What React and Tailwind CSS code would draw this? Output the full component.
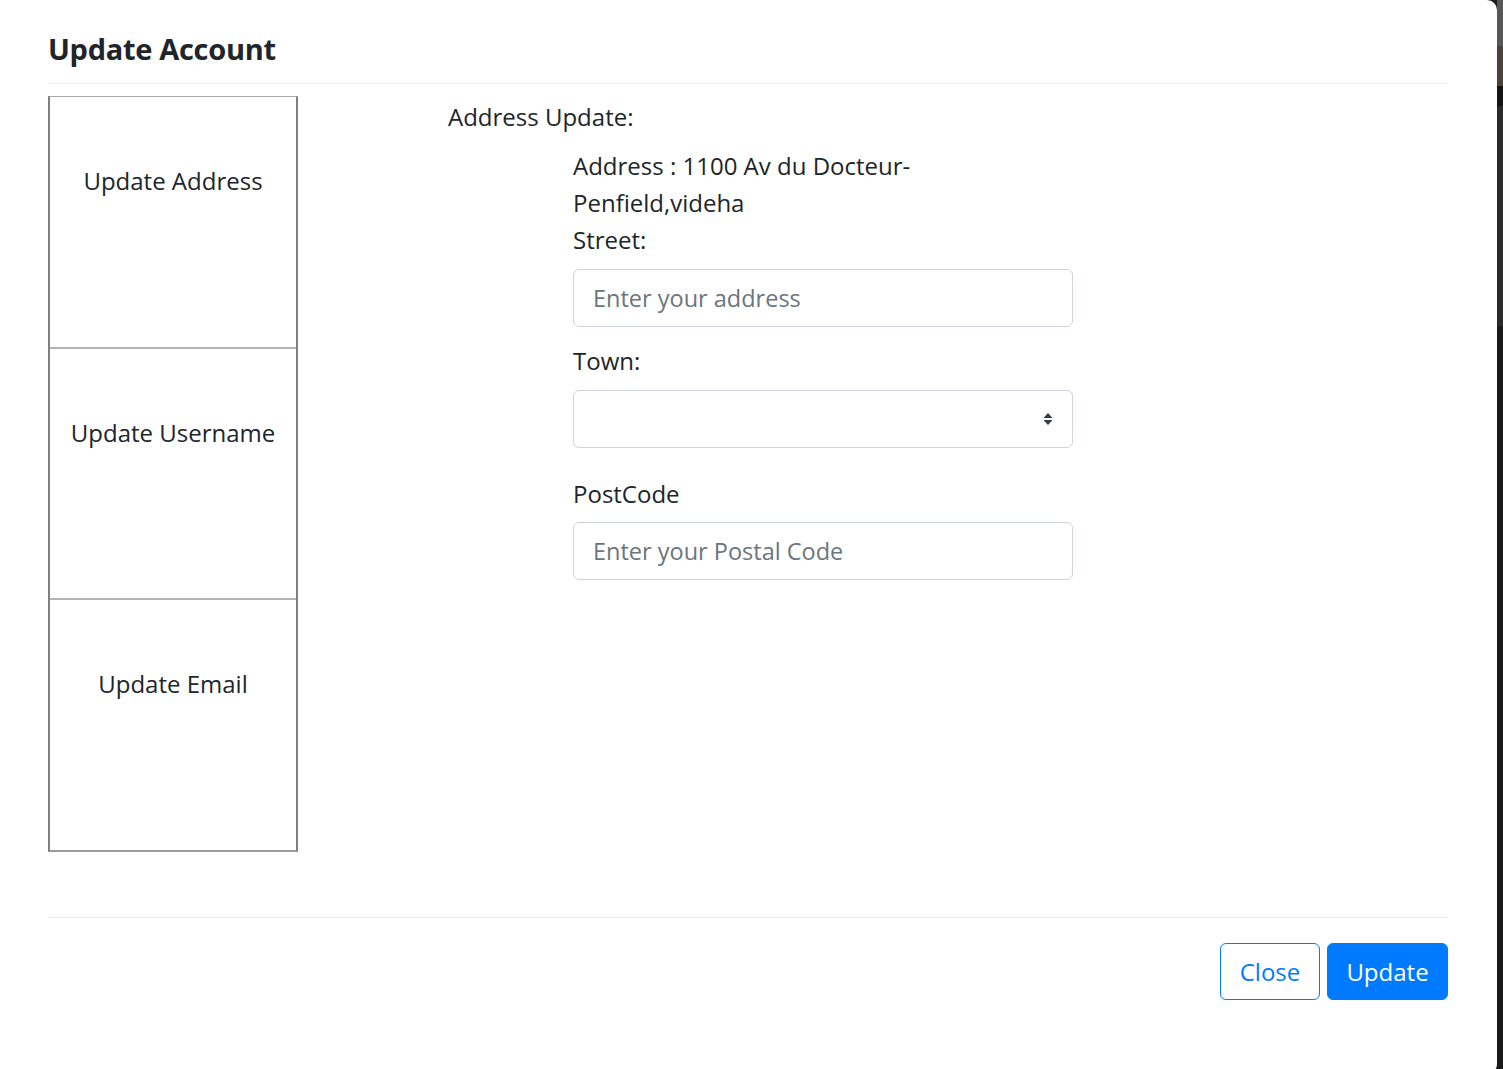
import React from 'react';

const tabs = ['Update Address', 'Update Username', 'Update Email'];

function SelectArrows() {
    return (
        <svg width="10" height="14" viewBox="0 0 10 14" className="text-[#343a40]">
            <path d="M5 1 L9.5 6 H0.5 Z" fill="currentColor" />
            <path d="M5 13 L9.5 8 H0.5 Z" fill="currentColor" />
        </svg>
    );
}

const App = () => {
    return (
        <div className="flex items-start h-[1069px] overflow-hidden bg-[#1c1c1c] font-['Open_Sans',sans-serif] text-[24px] leading-[36px] text-[#212529]">
            <div className="w-[1497px] h-[1074px] shrink-0 bg-white rounded-r-[10px] pl-[48px] pr-[49px] flex flex-col">
                {/* header */}
                <div className="pt-[26px] pb-[12px] border-b border-[#e9ecef]">
                    <h5 className="text-[29px] leading-[45px] font-bold tracking-[-0.3px]">Update Account</h5>
                </div>

                {/* body */}
                <div className="h-[833px] flex pt-[12px]">
                    <div className="w-[250px] h-[756px] flex flex-col border-t border-l-2 border-r-2 border-b-2 border-t-[#a9a9a9] border-l-[#808080] border-r-[#808080] border-b-[#9a9a9a]">
                        {tabs.map((t, i) => (
                            <div
                                key={t}
                                className={`flex-1 flex justify-center pt-[66px] ${i > 0 ? 'border-t-2 border-[#b4b4b4]' : ''}`}
                            >
                                {t}
                            </div>
                        ))}
                    </div>

                    <div className="ml-[150px] pt-[3px] flex flex-col">
                        <p>Address Update:</p>
                        <div className="pl-[125px] mt-[12px] flex flex-col leading-[37px]">
                            <p>
                                Address : 1100 Av du Docteur-
                                <br />
                                Penfield,videha
                            </p>
                            <label>Street:</label>
                            <input
                                type="text"
                                placeholder="Enter your address"
                                className="mt-[11px] w-[500px] h-[58px] border border-[#ced4da] rounded-[6px] px-[19px] text-[23.5px] placeholder:text-[#6c757d] outline-none"
                            />
                            <label className="mt-[15px]">Town:</label>
                            <div className="mt-[11px] w-[500px] h-[58px] border border-[#ced4da] rounded-[6px] flex items-center justify-end pr-[19px]">
                                <SelectArrows />
                            </div>
                            <label className="mt-[27px]">PostCode</label>
                            <input
                                type="text"
                                placeholder="Enter your Postal Code"
                                className="mt-[10px] w-[500px] h-[58px] border border-[#ced4da] rounded-[6px] px-[19px] text-[23.5px] placeholder:text-[#6c757d] outline-none"
                            />
                        </div>
                    </div>
                </div>

                {/* footer */}
                <div className="border-t border-[#e9ecef] pt-[25px] flex justify-end gap-[7px]">
                    <button className="w-[100px] h-[57px] border border-[#007bff] text-[#007bff] rounded-[6px] bg-white">
                        Close
                    </button>
                    <button className="w-[121px] h-[57px] border border-[#007bff] bg-[#007bff] text-white rounded-[6px]">
                        Update
                    </button>
                </div>
            </div>

            {/* backdrop strip */}
            <div className="flex-1 h-full flex flex-col">
                <div className="h-[46px] bg-[#575757]" />
                <div className="h-[40px] bg-[#4a4339]" />
                <div className="h-[20px] bg-[#141414]" />
                <div className="h-[220px] bg-[#2a2a2a]" />
                <div className="flex-1 bg-[#1a1a1a]" />
            </div>
        </div>
    );
};

export default App;
